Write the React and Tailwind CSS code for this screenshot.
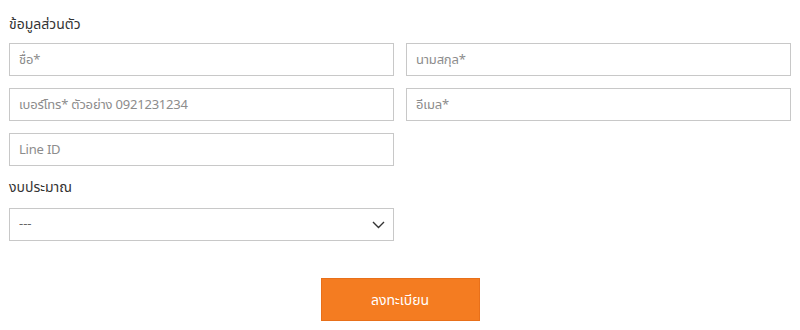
const font = { fontFamily: '"Noto Sans", "Noto Sans Thai", "Liberation Sans", sans-serif' }
const narrow = { fontFamily: '"Liberation Sans Narrow", "Noto Sans Thai", "Noto Sans", sans-serif' }

function Field({ placeholder }) {
  return (
    <input
      type="text"
      placeholder={placeholder}
      style={narrow}
      className="h-[33px] w-full border border-[#c8c8c8] bg-white px-[9px] text-[13px] tracking-[-0.2px] text-[#333] placeholder:text-[#8c8c8c] outline-none"
    />
  )
}

function Chevron() {
  return (
    <svg
      className="pointer-events-none absolute right-[9px] top-[13px]"
      width="13"
      height="8"
      viewBox="0 0 13 8"
      fill="none"
      stroke="#333"
      strokeWidth="1.4"
    >
      <path d="M1 1l5.5 5.5L12 1" />
    </svg>
  )
}

export default function App() {
  return (
    <div className="min-h-[330px] w-[800px] bg-white px-[9px] pt-[14px] text-[#333]" style={font}>
      <p className="mb-[9px] text-[14px] leading-[20px]">ข้อมูลส่วนตัว</p>

      <div className="grid grid-cols-2 gap-x-[12px] gap-y-[12px]">
        <Field placeholder="ชื่อ*" />
        <Field placeholder="นามสกุล*" />
        <Field placeholder="เบอร์โทร* ตัวอย่าง 0921231234" />
        <Field placeholder="อีเมล*" />
        <Field placeholder="Line ID" />
      </div>

      <p className="mt-[11px] mb-[11px] text-[14px] leading-[20px]">งบประมาณ</p>

      <div className="grid grid-cols-2 gap-x-[12px]">
        <div className="relative">
          <select
            style={narrow}
            className="h-[33px] w-full appearance-none border border-[#c8c8c8] bg-white px-[9px] text-[13px] text-[#666] outline-none"
          >
            <option>---</option>
          </select>
          <Chevron />
        </div>
      </div>

      <div className="mt-[37px] flex justify-center">
        <button className="h-[43px] w-[159px] border border-[#e8701a] bg-[#f47c21] text-[14px] text-white">
          ลงทะเบียน
        </button>
      </div>
    </div>
  )
}
